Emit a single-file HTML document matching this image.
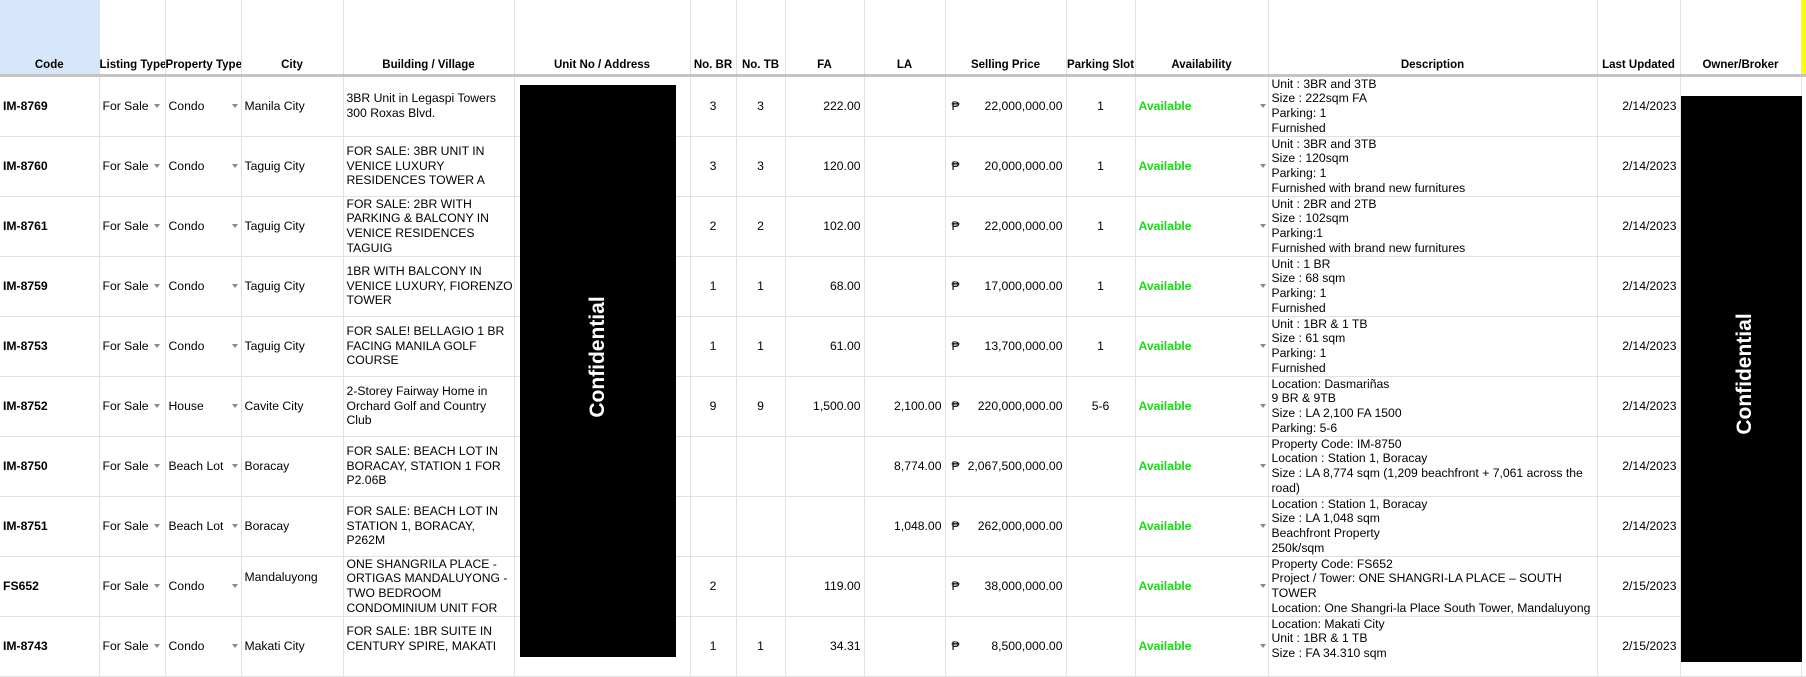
<!DOCTYPE html>
<html><head><meta charset="utf-8"><style>
*{margin:0;padding:0;box-sizing:border-box}
html,body{width:1806px;height:667px;overflow:hidden;background:#fff;font-family:"Liberation Sans",Arial,sans-serif;color:#000}
table{border-collapse:collapse;table-layout:fixed;position:absolute;left:0;top:0;width:1806px}
td,th{border-right:1px solid #e1e1e1;border-bottom:1px solid #e1e1e1;font-size:12.2px;padding:0;position:relative;overflow:hidden;white-space:nowrap}
th{height:75px;vertical-align:bottom;font-weight:bold;font-size:11.5px;padding-bottom:3px;text-align:center;border-bottom:3px solid #c4c4c4}
th.code{background:#d6e6fb}
tr.r td{height:60px}
.c{display:flex;align-items:center;height:59px;padding:0 3px;line-height:14.6px}
.l{justify-content:flex-start}.rt{justify-content:flex-end}.ct{justify-content:center}
.b{font-weight:bold}
.arr{position:absolute;top:27px;width:0;height:0;border-left:3px solid transparent;border-right:3px solid transparent;border-top:4px solid #888}
.g{color:#11e011;font-weight:bold}
.peso{position:absolute;left:6px;top:22px;font-size:12px}
.blk{position:absolute;background:#000}
.conf{position:absolute;color:#fff;font-weight:bold;font-size:21px;transform:translate(-50%,-50%) rotate(-90deg);white-space:nowrap}
</style></head><body>
<table>
<colgroup><col style="width:99px"><col style="width:66px"><col style="width:76px"><col style="width:102px"><col style="width:171px"><col style="width:176px"><col style="width:46px"><col style="width:49px"><col style="width:79px"><col style="width:81px"><col style="width:121px"><col style="width:69px"><col style="width:133px"><col style="width:329px"><col style="width:83px"><col style="width:121px"><col style="width:5px"></colgroup>
<tr><th class="code">Code</th><th>Listing Type</th><th>Property Type</th><th>City</th><th>Building / Village</th><th>Unit No / Address</th><th>No. BR</th><th>No. TB</th><th>FA</th><th>LA</th><th>Selling Price</th><th>Parking Slot</th><th>Availability</th><th>Description</th><th>Last Updated</th><th>Owner/Broker</th><th style="background:#ffff00;border-right:none"></th></tr>

<tr class="r"><td><div class="c l b">IM-8769</div></td><td><div class="c l">For Sale</div><span class="arr" style="left:54px"></span></td><td><div class="c l">Condo</div><span class="arr" style="left:66px"></span></td><td><div class="c l">Manila City</div></td><td><div class="c l">3BR Unit in Legaspi Towers<br>300 Roxas Blvd.</div></td><td></td><td><div class="c ct">3</div></td><td><div class="c ct">3</div></td><td><div class="c rt">222.00</div></td><td></td><td><span class="peso">₱</span><div class="c rt">22,000,000.00</div></td><td><div class="c ct">1</div></td><td><div class="c l g">Available</div><span class="arr" style="left:124px"></span></td><td><div class="c l">Unit : 3BR and 3TB<br>Size : 222sqm FA<br>Parking: 1<br>Furnished</div></td><td><div class="c rt">2/14/2023</div></td><td></td><td></td></tr>

<tr class="r"><td><div class="c l b">IM-8760</div></td><td><div class="c l">For Sale</div><span class="arr" style="left:54px"></span></td><td><div class="c l">Condo</div><span class="arr" style="left:66px"></span></td><td><div class="c l">Taguig City</div></td><td><div class="c l">FOR SALE: 3BR UNIT IN<br>VENICE LUXURY<br>RESIDENCES TOWER A</div></td><td></td><td><div class="c ct">3</div></td><td><div class="c ct">3</div></td><td><div class="c rt">120.00</div></td><td></td><td><span class="peso">₱</span><div class="c rt">20,000,000.00</div></td><td><div class="c ct">1</div></td><td><div class="c l g">Available</div><span class="arr" style="left:124px"></span></td><td><div class="c l">Unit : 3BR and 3TB<br>Size : 120sqm<br>Parking: 1<br>Furnished with brand new furnitures</div></td><td><div class="c rt">2/14/2023</div></td><td></td><td></td></tr>

<tr class="r"><td><div class="c l b">IM-8761</div></td><td><div class="c l">For Sale</div><span class="arr" style="left:54px"></span></td><td><div class="c l">Condo</div><span class="arr" style="left:66px"></span></td><td><div class="c l">Taguig City</div></td><td><div class="c l">FOR SALE: 2BR WITH<br>PARKING &amp; BALCONY IN<br>VENICE RESIDENCES<br>TAGUIG</div></td><td></td><td><div class="c ct">2</div></td><td><div class="c ct">2</div></td><td><div class="c rt">102.00</div></td><td></td><td><span class="peso">₱</span><div class="c rt">22,000,000.00</div></td><td><div class="c ct">1</div></td><td><div class="c l g">Available</div><span class="arr" style="left:124px"></span></td><td><div class="c l">Unit : 2BR and 2TB<br>Size : 102sqm<br>Parking:1<br>Furnished with brand new furnitures</div></td><td><div class="c rt">2/14/2023</div></td><td></td><td></td></tr>

<tr class="r"><td><div class="c l b">IM-8759</div></td><td><div class="c l">For Sale</div><span class="arr" style="left:54px"></span></td><td><div class="c l">Condo</div><span class="arr" style="left:66px"></span></td><td><div class="c l">Taguig City</div></td><td><div class="c l">1BR WITH BALCONY IN<br>VENICE LUXURY, FIORENZO<br>TOWER</div></td><td></td><td><div class="c ct">1</div></td><td><div class="c ct">1</div></td><td><div class="c rt">68.00</div></td><td></td><td><span class="peso">₱</span><div class="c rt">17,000,000.00</div></td><td><div class="c ct">1</div></td><td><div class="c l g">Available</div><span class="arr" style="left:124px"></span></td><td><div class="c l">Unit : 1 BR<br>Size : 68 sqm<br>Parking: 1<br>Furnished</div></td><td><div class="c rt">2/14/2023</div></td><td></td><td></td></tr>

<tr class="r"><td><div class="c l b">IM-8753</div></td><td><div class="c l">For Sale</div><span class="arr" style="left:54px"></span></td><td><div class="c l">Condo</div><span class="arr" style="left:66px"></span></td><td><div class="c l">Taguig City</div></td><td><div class="c l">FOR SALE! BELLAGIO 1 BR<br>FACING MANILA GOLF<br>COURSE</div></td><td></td><td><div class="c ct">1</div></td><td><div class="c ct">1</div></td><td><div class="c rt">61.00</div></td><td></td><td><span class="peso">₱</span><div class="c rt">13,700,000.00</div></td><td><div class="c ct">1</div></td><td><div class="c l g">Available</div><span class="arr" style="left:124px"></span></td><td><div class="c l">Unit : 1BR &amp; 1 TB<br>Size : 61 sqm<br>Parking: 1<br>Furnished</div></td><td><div class="c rt">2/14/2023</div></td><td></td><td></td></tr>

<tr class="r"><td><div class="c l b">IM-8752</div></td><td><div class="c l">For Sale</div><span class="arr" style="left:54px"></span></td><td><div class="c l">House</div><span class="arr" style="left:66px"></span></td><td><div class="c l">Cavite City</div></td><td><div class="c l">2-Storey Fairway Home in<br>Orchard Golf and Country<br>Club</div></td><td></td><td><div class="c ct">9</div></td><td><div class="c ct">9</div></td><td><div class="c rt">1,500.00</div></td><td><div class="c rt">2,100.00</div></td><td><span class="peso">₱</span><div class="c rt">220,000,000.00</div></td><td><div class="c ct">5-6</div></td><td><div class="c l g">Available</div><span class="arr" style="left:124px"></span></td><td><div class="c l">Location: Dasmariñas<br>9 BR &amp; 9TB<br>Size : LA 2,100 FA 1500<br>Parking: 5-6</div></td><td><div class="c rt">2/14/2023</div></td><td></td><td></td></tr>

<tr class="r"><td><div class="c l b">IM-8750</div></td><td><div class="c l">For Sale</div><span class="arr" style="left:54px"></span></td><td><div class="c l">Beach Lot</div><span class="arr" style="left:66px"></span></td><td><div class="c l">Boracay</div></td><td><div class="c l">FOR SALE: BEACH LOT IN<br>BORACAY, STATION 1 FOR<br>P2.06B</div></td><td></td><td></td><td></td><td></td><td><div class="c rt">8,774.00</div></td><td><span class="peso">₱</span><div class="c rt">2,067,500,000.00</div></td><td></td><td><div class="c l g">Available</div><span class="arr" style="left:124px"></span></td><td><div class="c l">Property Code: IM-8750<br>Location : Station 1, Boracay<br>Size : LA 8,774 sqm (1,209 beachfront + 7,061 across the<br>road)</div></td><td><div class="c rt">2/14/2023</div></td><td></td><td></td></tr>

<tr class="r"><td><div class="c l b">IM-8751</div></td><td><div class="c l">For Sale</div><span class="arr" style="left:54px"></span></td><td><div class="c l">Beach Lot</div><span class="arr" style="left:66px"></span></td><td><div class="c l">Boracay</div></td><td><div class="c l">FOR SALE: BEACH LOT IN<br>STATION 1, BORACAY,<br>P262M</div></td><td></td><td></td><td></td><td></td><td><div class="c rt">1,048.00</div></td><td><span class="peso">₱</span><div class="c rt">262,000,000.00</div></td><td></td><td><div class="c l g">Available</div><span class="arr" style="left:124px"></span></td><td><div class="c l">Location : Station 1, Boracay<br>Size : LA 1,048 sqm<br>Beachfront Property<br>250k/sqm</div></td><td><div class="c rt">2/14/2023</div></td><td></td><td></td></tr>

<tr class="r"><td><div class="c l b">FS652</div></td><td><div class="c l">For Sale</div><span class="arr" style="left:54px"></span></td><td><div class="c l">Condo</div><span class="arr" style="left:66px"></span></td><td><div class="c l" style="align-items:flex-start;padding-top:13px">Mandaluyong</div></td><td><div class="c l">ONE SHANGRILA PLACE -<br>ORTIGAS MANDALUYONG -<br>TWO BEDROOM<br>CONDOMINIUM UNIT FOR</div></td><td></td><td><div class="c ct">2</div></td><td></td><td><div class="c rt">119.00</div></td><td></td><td><span class="peso">₱</span><div class="c rt">38,000,000.00</div></td><td></td><td><div class="c l g">Available</div><span class="arr" style="left:124px"></span></td><td><div class="c l">Property Code: FS652<br>Project / Tower: ONE SHANGRI-LA PLACE – SOUTH<br>TOWER<br>Location: One Shangri-la Place South Tower, Mandaluyong</div></td><td><div class="c rt">2/15/2023</div></td><td></td><td></td></tr>

<tr class="r"><td><div class="c l b">IM-8743</div></td><td><div class="c l">For Sale</div><span class="arr" style="left:54px"></span></td><td><div class="c l">Condo</div><span class="arr" style="left:66px"></span></td><td><div class="c l">Makati City</div></td><td><div class="c l">FOR SALE: 1BR SUITE IN<br>CENTURY SPIRE, MAKATI<br>&nbsp;</div></td><td></td><td><div class="c ct">1</div></td><td><div class="c ct">1</div></td><td><div class="c rt">34.31</div></td><td></td><td><span class="peso">₱</span><div class="c rt">8,500,000.00</div></td><td></td><td><div class="c l g">Available</div><span class="arr" style="left:124px"></span></td><td><div class="c l">Location: Makati City<br>Unit : 1BR &amp; 1 TB<br>Size : FA 34.310 sqm<br>&nbsp;</div></td><td><div class="c rt">2/15/2023</div></td><td></td><td></td></tr>
</table>
<div style="position:absolute;left:1801px;top:78px;width:5px;height:589px;background:#fff;border-left:1px solid #e1e1e1"></div>
<div class="blk" style="left:520px;top:85px;width:156px;height:572px"></div>
<div class="conf" style="left:598px;top:357px">Confidential</div>
<div class="blk" style="left:1681px;top:96px;width:121px;height:566px"></div>
<div class="conf" style="left:1745px;top:374px">Confidential</div>
</body></html>
